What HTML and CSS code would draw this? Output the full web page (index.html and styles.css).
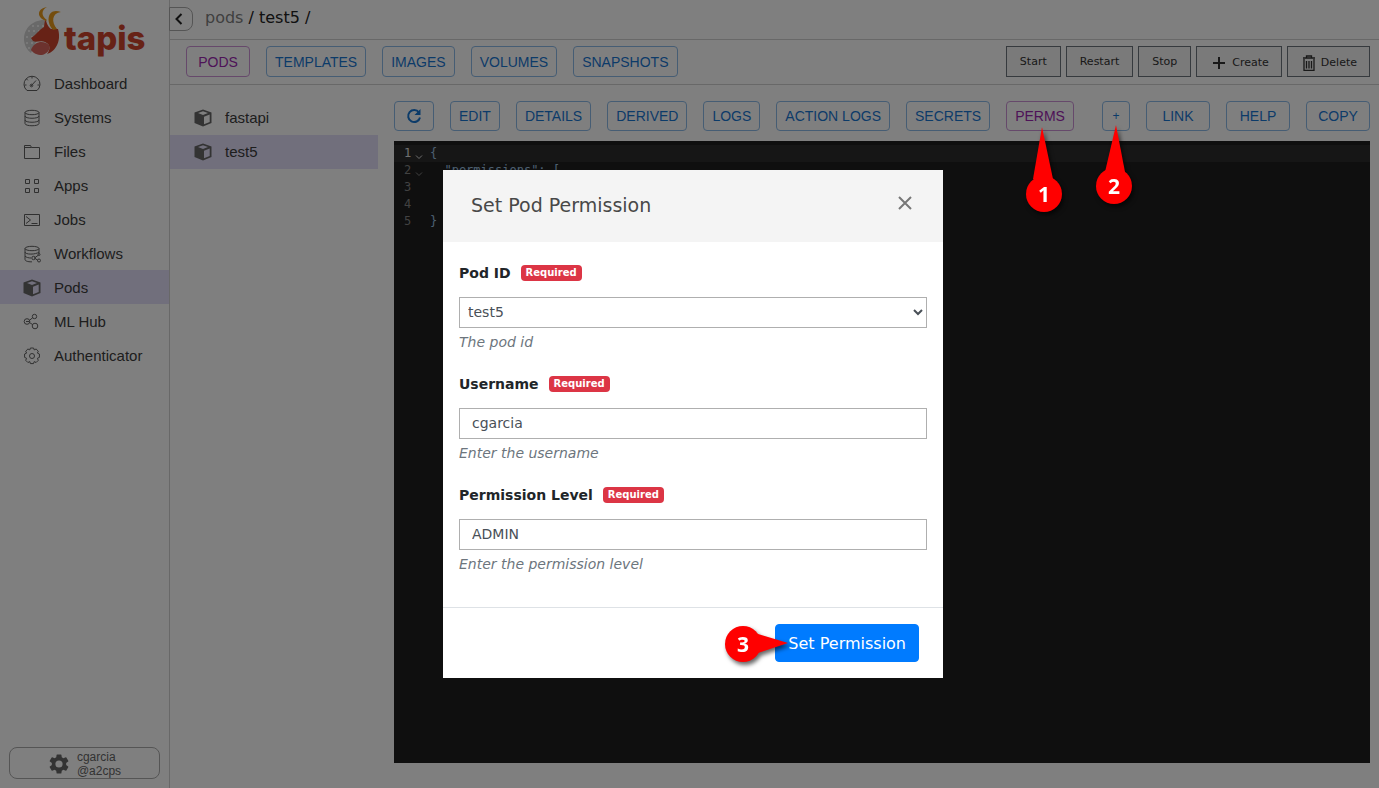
FILE: index.html
```html
<!DOCTYPE html>
<html lang="en">
<head>
<meta charset="utf-8">
<meta name="viewport" content="width=device-width, initial-scale=1">
<title>Tapis Pods</title>
<link rel="stylesheet" href="styles.css">
</head>
<body>
<svg class="defs" width="0" height="0" aria-hidden="true">
  <symbol id="cube" viewBox="0 0 18 18">
    <path fill="currentColor" fill-rule="evenodd" d="M9 0.5 17.5 3.5V14L9 17.5 0.5 14V3.5ZM9 2.3 4 4.1 9 6 14 4.1ZM10 7.8V15.3L15.7 13V5.6Z"/>
  </symbol>
</svg>
<div class="app">
  <nav class="sidebar" aria-label="Main">
    <svg class="logo" width="124" height="60" viewBox="0 0 124 60" role="img" aria-label="tapis">
      <path fill="#d2d2d2" d="M20 20C8 20 0 29 0 39 0 45 3 50 7 53L12 42 22 26Z"/>
      <path fill="none" stroke="#f0f0f0" stroke-width="2" stroke-dasharray="2 3" d="M8 26h14M4 31h14M2 37h8M2 43h8M4 48h5"/>
      <path fill="#cf452c" d="M21 19C23 21 22 25 27 29L34 29C38 43 30 52 23 54 27 49 26 44 21 42 17 40 12 43 9 41L7 38C13 34 16 29 20 27Z"/>
      <path fill="#d9645c" d="M7 50C10 41 20 40 25 45 27 49 23 54 18 55 13 55 9 53 7 50Z"/>
      <path fill="#e89a1c" d="M23 7C12 9 13 18 22 21L23 20C17 16 17 10 23 7Z"/>
      <path fill="#e89a1c" d="M37 12C24 7 21 21 29 30L33 29C27 22 28 13 37 12Z"/>
      <text class="logo-text" x="40" y="50">tapis</text>
    </svg>
    <ul class="nav-list">
      <li><a class="nav-item" href="#dashboard"><svg class="icon" viewBox="0 0 18 18"><path d="M4 15.500a8 8 0 1 1 10 0ZM9 1.500v2M3.500 4l1.300 1.300M1.500 10h2M14.500 10h2M8 11l5-5.500"/><circle cx="8.500" cy="10.500" r="1.300"/></svg>Dashboard</a></li>
      <li><a class="nav-item" href="#systems"><svg class="icon" viewBox="0 0 18 18"><path d="M2 3.500v11c0 3 14 3 14 0v-11M2 7c0 3 14 3 14 0M2 11c0 3 14 3 14 0"/><ellipse cx="9" cy="3.500" rx="7" ry="2.200"/></svg>Systems</a></li>
      <li><a class="nav-item" href="#files"><svg class="icon" viewBox="0 0 18 18"><path d="M1.500 15.500v-13h6l1 2h8v11ZM1.500 4.500h7"/></svg>Files</a></li>
      <li><a class="nav-item" href="#apps"><svg class="icon" viewBox="0 0 18 18"><path d="M2.500 2.500h4v4h-4ZM11.500 2.500h4v4h-4ZM2.500 11.500h4v4h-4ZM11.500 11.500h4v4h-4Z"/></svg>Apps</a></li>
      <li><a class="nav-item" href="#jobs"><svg class="icon" viewBox="0 0 18 18"><path d="M1.500 3.500h15v11h-15ZM3 5.500 7.500 9 3 12.500M8.500 12.500h6"/></svg>Jobs</a></li>
      <li><a class="nav-item" href="#workflows"><svg class="icon" viewBox="0 0 18 18"><path d="M2 3.500v11c0 2 5 2.500 7 2.300M16 3.500v5M2 7c0 2.800 11 2.800 14 0M2 11c1 1.500 4 2 6 2M11.500 13l4-3M11.500 13l3.500 2.500"/><ellipse cx="9" cy="3.500" rx="7" ry="2.200"/><circle cx="10.500" cy="13" r="1.700"/><circle cx="16" cy="9.500" r="1"/><circle cx="16" cy="15.500" r="1.500"/></svg>Workflows</a></li>
      <li><a class="nav-item nav-item-active" href="#pods" aria-current="page"><svg class="icon icon-solid"><use href="#cube"/></svg>Pods</a></li>
      <li><a class="nav-item" href="#mlhub"><svg class="icon" viewBox="0 0 18 18"><circle cx="4" cy="8.500" r="2.800"/><circle cx="11.500" cy="3.500" r="2.200"/><circle cx="12" cy="13" r="2.800"/><path d="M6.500 7.300 9.700 4.700M6.500 9.500l3 2M3 8.500h3.500"/></svg>ML Hub</a></li>
      <li><a class="nav-item" href="#authenticator"><svg class="icon" viewBox="0 0 18 18"><path d="M7.400 1h3.200l.6 1.900 1.900-.9 2.200 2.200-.9 1.900 2 .9v3.400l-2 .9.900 2-2.200 2.200-1.900-.9-.7 2H7.400l-.6-2-1.900.9-2.200-2.200.9-2-2-.9V7l2-.9-.9-1.900L4.900 2l1.900.9Z"/><circle cx="9" cy="9" r="2.500"/></svg>Authenticator</a></li>
    </ul>
    <button class="user-button" type="button">
      <svg class="user-gear" viewBox="2 2 20 20"><path fill="currentColor" d="M19.140 12.940c.04-.3.060-.61.060-.94 0-.32-.020-.64-.070-.94l2.030-1.580a.49.49 0 0 0 .12-.61l-1.920-3.320a.49.49 0 0 0-.59-.22l-2.390.96c-.5-.38-1.030-.7-1.620-.94L14.400 2.810a.48.48 0 0 0-.48-.41h-3.840a.47.47 0 0 0-.47.41L9.250 5.350c-.59.24-1.130.57-1.620.94l-2.390-.96a.48.48 0 0 0-.59.22L2.740 8.870a.48.48 0 0 0 .12.61l2.030 1.580c-.05.3-.09.63-.09.94s.020.64.070.94l-2.030 1.580a.49.49 0 0 0-.12.61l1.920 3.320c.12.22.37.29.59.22l2.390-.96c.5.38 1.030.7 1.620.94l.36 2.540c.05.24.24.41.48.41h3.840c.24 0 .44-.17.47-.41l.36-2.540c.59-.24 1.130-.56 1.620-.94l2.390.96c.22.080.47 0 .59-.22l1.920-3.320a.47.47 0 0 0-.12-.61ZM12 15.600A3.600 3.600 0 1 1 12 8.400a3.600 3.600 0 0 1 0 7.200Z"/></svg>
      <span class="user-name">cgarcia<br>@a2cps</span>
    </button>
  </nav>

  <div class="content">
    <header class="crumbs">
      <button class="collapse" type="button" aria-label="Collapse sidebar"><svg width="10" height="12" viewBox="0 0 10 12"><path d="M7.500 1 2.500 6l5 5" fill="none" stroke="currentColor" stroke-width="2"/></svg></button>
      <p class="crumb-text"><a class="crumb-link" href="#pods">pods</a> / test5 /</p>
    </header>

    <div class="toolbar">
      <div class="group">
        <button class="btn btn-tab btn-current" type="button">PODS</button>
        <button class="btn btn-tab" type="button">TEMPLATES</button>
        <button class="btn btn-tab" type="button">IMAGES</button>
        <button class="btn btn-tab" type="button">VOLUMES</button>
        <button class="btn btn-tab" type="button">SNAPSHOTS</button>
      </div>
      <div class="actions">
        <button class="action" type="button">Start</button>
        <button class="action" type="button">Restart</button>
        <button class="action" type="button">Stop</button>
        <button class="action action-icon" type="button"><svg width="16" height="16" viewBox="0 0 16 16"><path d="M8 2v12M2 8h12" stroke="currentColor" stroke-width="2"/></svg>Create</button>
        <button class="action action-icon" type="button"><svg width="14" height="16" viewBox="0 0 14 16" fill="none" stroke="currentColor"><path d="M1 3h12M4.500 3V1h5v2M2 4v11.500h10V4M4.500 6v7.500M7 6v7.500M9.500 6v7.500" stroke-width="1.300"/></svg>Delete</button>
      </div>
    </div>

    <div class="workspace">
      <ul class="pod-list">
        <li><a class="pod" href="#fastapi"><svg class="icon icon-solid"><use href="#cube"/></svg>fastapi</a></li>
        <li><a class="pod pod-active" href="#test5"><svg class="icon icon-solid"><use href="#cube"/></svg>test5</a></li>
      </ul>

      <main class="detail">
        <div class="detail-bar">
          <div class="group">
            <button class="btn btn-refresh" type="button" aria-label="Refresh"><svg width="16" height="16" viewBox="0 0 16 16"><path d="M13 4.500A6 6 0 1 0 14 9.500" fill="none" stroke="currentColor" stroke-width="2"/><path d="M14.500 1v6h-6Z" fill="currentColor"/></svg></button>
            <button class="btn" type="button">EDIT</button>
            <button class="btn" type="button">DETAILS</button>
            <button class="btn" type="button">DERIVED</button>
            <button class="btn" type="button">LOGS</button>
            <button class="btn" type="button">ACTION LOGS</button>
            <button class="btn" type="button">SECRETS</button>
            <div class="pin-anchor">
              <button class="btn btn-current" type="button">PERMS</button>
              <svg class="pin pin-one" width="52" height="96" viewBox="0 0 52 96"><path fill="#f00" d="M24 3 35 55 26 60 15 55Z"/><circle cx="26" cy="70" r="18" fill="#f00"/><text class="pin-text" x="26" y="78">1</text></svg>
            </div>
          </div>
          <div class="group">
            <div class="pin-anchor">
              <button class="btn btn-plus" type="button">+</button>
              <svg class="pin pin-two" width="52" height="90" viewBox="0 0 52 90"><path fill="#f00" d="M24 3 33 50 13 50Z"/><circle cx="22" cy="64" r="18" fill="#f00"/><text class="pin-text" x="22" y="72">2</text></svg>
            </div>
            <button class="btn btn-wide" type="button">LINK</button>
            <button class="btn btn-wide" type="button">HELP</button>
            <button class="btn btn-wide" type="button">COPY</button>
          </div>
        </div>
        <div class="editor">
          <div class="line line-active"><span class="num">1</span><svg class="fold" viewBox="0 0 8 6"><path d="M1 1.500 4 4.500 7 1.500"/></svg><code>{</code></div>
          <div class="line"><span class="num">2</span><svg class="fold" viewBox="0 0 8 6"><path d="M1 1.500 4 4.500 7 1.500"/></svg><code>  "permissions": [</code></div>
          <div class="line"><span class="num">3</span><span class="fold"></span></div>
          <div class="line"><span class="num">4</span><span class="fold"></span><code>  ]</code></div>
          <div class="line"><span class="num">5</span><span class="fold"></span><code>}</code></div>
        </div>
      </main>
    </div>
  </div>
</div>

<div class="backdrop">
  <form class="modal" role="dialog" aria-labelledby="modal-title">
    <div class="modal-head">
      <h1 class="modal-title" id="modal-title">Set Pod Permission</h1>
      <button class="close" type="button" aria-label="Close"><svg width="16" height="16" viewBox="0 0 16 16"><path d="M2 2 14 14M14 2 2 14" stroke="currentColor" stroke-width="2"/></svg></button>
    </div>
    <div class="modal-body">
      <div class="field">
        <label class="label" for="pod">Pod ID <span class="badge">Required</span></label>
        <select class="control control-select" id="pod"><option>test5</option></select>
        <p class="hint">The pod id</p>
      </div>
      <div class="field">
        <label class="label" for="user">Username <span class="badge">Required</span></label>
        <input class="control" id="user" type="text" value="cgarcia">
        <p class="hint">Enter the username</p>
      </div>
      <div class="field">
        <label class="label" for="level">Permission Level <span class="badge">Required</span></label>
        <input class="control" id="level" type="text" value="ADMIN">
        <p class="hint">Enter the permission level</p>
      </div>
    </div>
    <div class="modal-foot">
      <div class="pin-anchor">
        <button class="submit" type="button">Set Permission</button>
        <svg class="pin pin-three" width="76" height="52" viewBox="0 0 76 52"><path fill="#f00" d="M69 25 39 16 39 35Z"/><circle cx="24" cy="26" r="18" fill="#f00"/><text class="pin-text" x="24" y="34">3</text></svg>
      </div>
    </div>
  </form>
</div>
</body>
</html>
```
FILE: styles.css
```css
* { box-sizing: border-box; }

body {
  margin: 0;
  background: #fff;
  color: #212529;
  font-family: "DejaVu Sans", sans-serif;
  font-size: 14px;
}

ul { list-style: none; margin: 0; padding: 0; }
a { color: inherit; text-decoration: none; }
button, input, select { font-family: inherit; margin: 0; }
svg { display: block; flex: none; }
.defs { position: absolute; }

.app { display: flex; min-height: 100vh; }

/* Sidebar */
.sidebar {
  display: flex;
  flex-direction: column;
  width: 170px;
  flex: none;
  border-right: 1px solid #d0d0d0;
}
.logo { margin: 0 0 6px 24px; }
.logo-text { font-family: Inter, sans-serif; font-size: 33px; font-weight: 800; fill: #cf452c; }
.nav-list { flex: 1; }
.nav-item, .pod {
  display: flex;
  align-items: center;
  gap: 13px;
  height: 34px;
  padding: 1px 0 0 23px;
  color: #3c3c3c;
  font-family: "Liberation Sans", sans-serif;
  font-size: 15px;
}
.nav-item-active, .pod-active { background: #e2def8; }
.icon { width: 18px; height: 18px; fill: none; stroke: #606060; }
.icon-solid { stroke: none; color: #666; }
.user-button {
  display: flex;
  align-items: center;
  justify-content: center;
  gap: 8px;
  height: 32px;
  margin: 9px;
  padding: 2px 0 0 1px;
  border: 1px solid #aaa;
  border-radius: 8px;
  background: none;
  color: #666;
}
.user-gear { width: 20px; height: 20px; }
.user-name {
  font-family: "Liberation Sans", sans-serif;
  font-size: 12px;
  line-height: 14px;
  text-align: left;
}

/* Header rows */
.content { display: flex; flex: 1; flex-direction: column; min-width: 0; }
.crumbs {
  display: flex;
  align-items: flex-start;
  gap: 12px;
  height: 40px;
  padding-top: 7px;
  border-bottom: 1px solid #d0d0d0;
}
.collapse {
  display: grid;
  place-items: center;
  width: 24px;
  height: 24px;
  margin-left: -1px;
  padding: 0 4px 0 0;
  border: 1px solid #aaa;
  border-radius: 0 8px 8px 0;
  background: none;
  color: #222;
}
.crumb-text { margin: 0; color: #222; font-size: 16px; line-height: 21px; }
.crumb-link { color: #808080; }
.toolbar {
  display: flex;
  align-items: center;
  justify-content: space-between;
  height: 45px;
  padding: 0 9px 1px 16px;
  border-bottom: 1px solid #d0d0d0;
}
.group { display: flex; gap: 16px; }
.btn {
  display: grid;
  place-items: center;
  height: 30px;
  padding: 0 8px;
  border: 1px solid #8cbae8;
  border-radius: 4px;
  background: none;
  color: #1976d2;
  font-family: "Liberation Sans", sans-serif;
  font-size: 14px;
  white-space: nowrap;
}
.btn-tab { min-width: 64px; height: 31px; }
.btn-current { border-color: #cd93d7; color: #9c27b0; }
.btn-refresh { width: 40px; }
.btn-wide { width: 64px; }
.btn-plus { width: 28px; font-size: 12px; }
.actions { display: flex; gap: 5px; }
.action {
  display: flex;
  align-items: center;
  justify-content: center;
  height: 31px;
  padding: 0 12px;
  border: 1px solid #6c757d;
  background: #f4f4f4;
  color: #333;
  font-size: 11px;
}
.action:not(.action-icon) { padding: 0 13px; }
.action-icon { gap: 5px; padding: 2px 12px 0 14px; }

/* Workspace */
.workspace { display: flex; flex: 1; gap: 16px; padding: 16px 9px 25px 0; }
.pod-list { width: 208px; flex: none; }
.pod { padding: 0 0 1px 24px; }
.detail { display: flex; flex: 1; flex-direction: column; gap: 10px; min-width: 0; }
.detail-bar { display: flex; justify-content: space-between; }
.editor {
  flex: 1;
  padding-top: 4px;
  background: #1e1e1e;
  color: #9cdcfe;
  font: 12px/17px "DejaVu Sans Mono", monospace;
}
.line { display: flex; height: 17px; padding-left: 10px; color: #858585; }
.line-active { background: #2c2c2c; color: #e0e0e0; }
.num { width: 11px; }
.fold { width: 8px; height: 6px; margin: 9px 7px 0 0; fill: none; stroke: currentColor; }
.line code { color: #9cc0e0; font: inherit; white-space: pre; }

/* Dialog */
.backdrop {
  position: fixed;
  inset: 0;
  display: flex;
  align-items: flex-start;
  justify-content: center;
  padding: 170px 0 0 7px;
  background: rgba(0, 0, 0, 0.5);
}
.modal { width: 500px; background: #fff; }
.modal-head {
  display: flex;
  align-items: center;
  justify-content: space-between;
  height: 72px;
  padding: 0 28px 2px;
  background: #f4f4f4;
}
.modal-title { margin: 0; color: #484848; font-size: 19px; font-weight: 400; }
.close { padding: 0 2px 4px; border: 0; background: none; color: #777; }
.modal-body { padding: 21px 16px 11px; }
.field { height: 111px; }
.label { display: flex; align-items: center; gap: 10px; height: 20px; font-weight: 700; }
.badge {
  padding: 0 5px;
  border-radius: 4px;
  background: #dc3545;
  color: #fff;
  font-size: 10px;
  line-height: 16px;
}
.control {
  display: block;
  width: 100%;
  height: 31px;
  margin: 14px 0 4px;
  padding: 4px 12px 6px;
  border: 1px solid #afafaf;
  border-radius: 0;
  background: #fff;
  color: #495057;
  font-size: 14px;
}
.control-select { padding: 4px 4px 6px; }
.hint { margin: 0; color: #6c757d; font-style: italic; line-height: 20px; }
.modal-foot {
  display: flex;
  justify-content: flex-end;
  padding: 16px 24px;
  border-top: 1px solid #dee2e6;
}
.submit {
  height: 38px;
  padding: 0 12px;
  border: 1px solid #007bff;
  border-radius: 4px;
  background: #007bff;
  color: #fff;
  font-size: 16px;
}

/* Numbered callouts */
.pin-anchor { position: relative; }
.pin {
  position: absolute;
  z-index: 10;
  filter: drop-shadow(2px 3px 2px rgba(0, 0, 0, 0.6));
  pointer-events: none;
}
.pin-one { top: 23px; left: 12px; }
.pin-two { top: 21px; left: -10px; }
.pin-three { top: -6px; left: -56px; }
.pin-text {
  fill: #fff;
  font-family: "Open Sans", "Noto Sans", sans-serif;
  font-size: 21px;
  font-weight: 700;
  text-anchor: middle;
}
```
